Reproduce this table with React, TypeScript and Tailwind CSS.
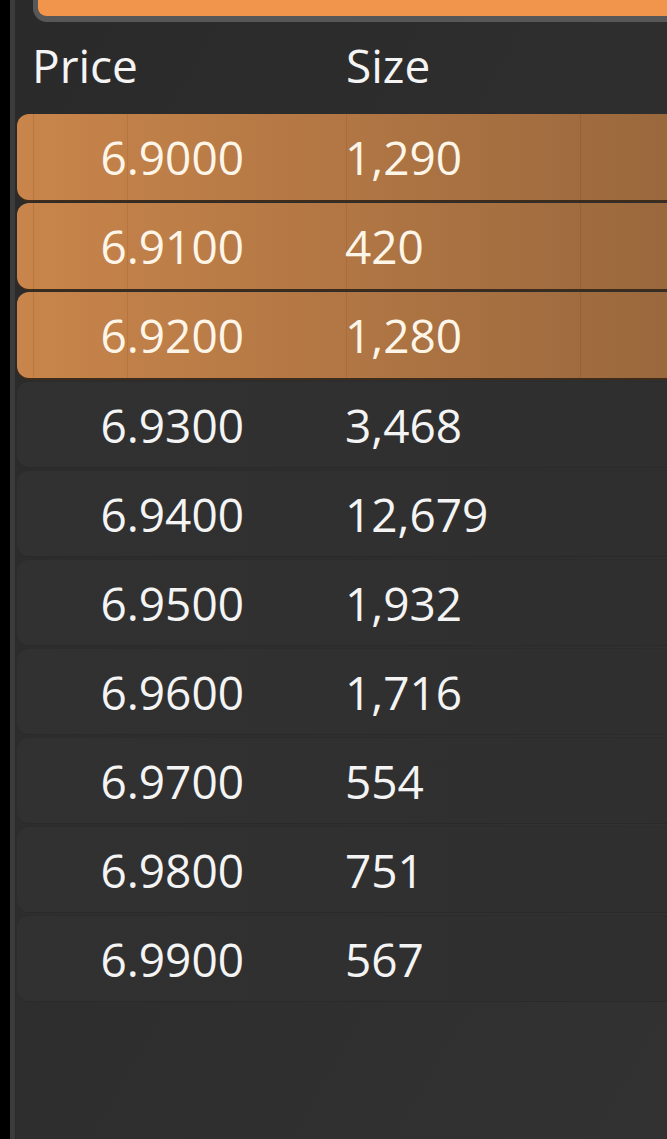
import React from "react";

const rows = [
  { price: "6.9000", size: "1,290", hot: true },
  { price: "6.9100", size: "420", hot: true },
  { price: "6.9200", size: "1,280", hot: true },
  { price: "6.9300", size: "3,468", hot: false },
  { price: "6.9400", size: "12,679", hot: false },
  { price: "6.9500", size: "1,932", hot: false },
  { price: "6.9600", size: "1,716", hot: false },
  { price: "6.9700", size: "554", hot: false },
  { price: "6.9800", size: "751", hot: false },
  { price: "6.9900", size: "567", hot: false },
];

export default function App() {
  return (
    <div
      className="flex w-[667px] h-[1139px] overflow-hidden bg-black"
      style={{ fontFamily: '"Open Sans", "Noto Sans", sans-serif' }}
    >
      <div className="w-[10px] shrink-0 bg-black" />
      <div className="w-[6px] shrink-0 bg-[#3b3b3b] border-r border-[#2a2a2a]" />
      <div className="flex-1 flex flex-col bg-gradient-to-br from-[#2a2a2a] to-[#323232]">
        <div className="ml-[17px] h-[22px] shrink-0 bg-[#f0954b] border-l-[5px] border-b-[6px] border-[#575757] rounded-bl-[14px]" />

        <div className="h-[92px] shrink-0 flex items-start pt-[12px] text-[46px] leading-[62px] text-[#f4f4f4]">
          <div className="pl-[16px] w-[330px]">Price</div>
          <div>Size</div>
        </div>

        <div className="flex flex-col gap-[3px]">
          {rows.map((r) => (
            <div
              key={r.price}
              className={
                r.hot
                  ? "relative h-[86px] ml-[1px] flex items-center rounded-l-[12px] bg-gradient-to-r from-[#c9854b] to-[#9a683d] shadow-[0_2px_0_#3d2b1b] text-[#fdf6e8]"
                  : "relative h-[86px] ml-[1px] flex items-center rounded-l-[12px] bg-gradient-to-r from-[#313131] to-[#2f2f2f] border-t border-[#2c2c2c] shadow-[0_1px_0_#2a2a2a] text-[#f4f4f4]"
              }
            >
              {r.hot && (
                <>
                  <div className="absolute top-0 bottom-0 left-[16px] w-px bg-[#b8773f]" />
                  <div className="absolute top-0 bottom-0 left-[110px] w-px bg-[#b5763f]" />
                  <div className="absolute top-0 bottom-0 left-[329px] w-px bg-[#a86d3c]" />
                  <div className="absolute top-0 bottom-0 left-[563px] w-px bg-[#966339]" />
                </>
              )}
              <div className="relative w-[227px] text-right text-[46px] leading-[62px]">{r.price}</div>
              <div className="relative pl-[101px] text-[46px] leading-[62px]">{r.size}</div>
            </div>
          ))}
        </div>
      </div>
    </div>
  );
}
